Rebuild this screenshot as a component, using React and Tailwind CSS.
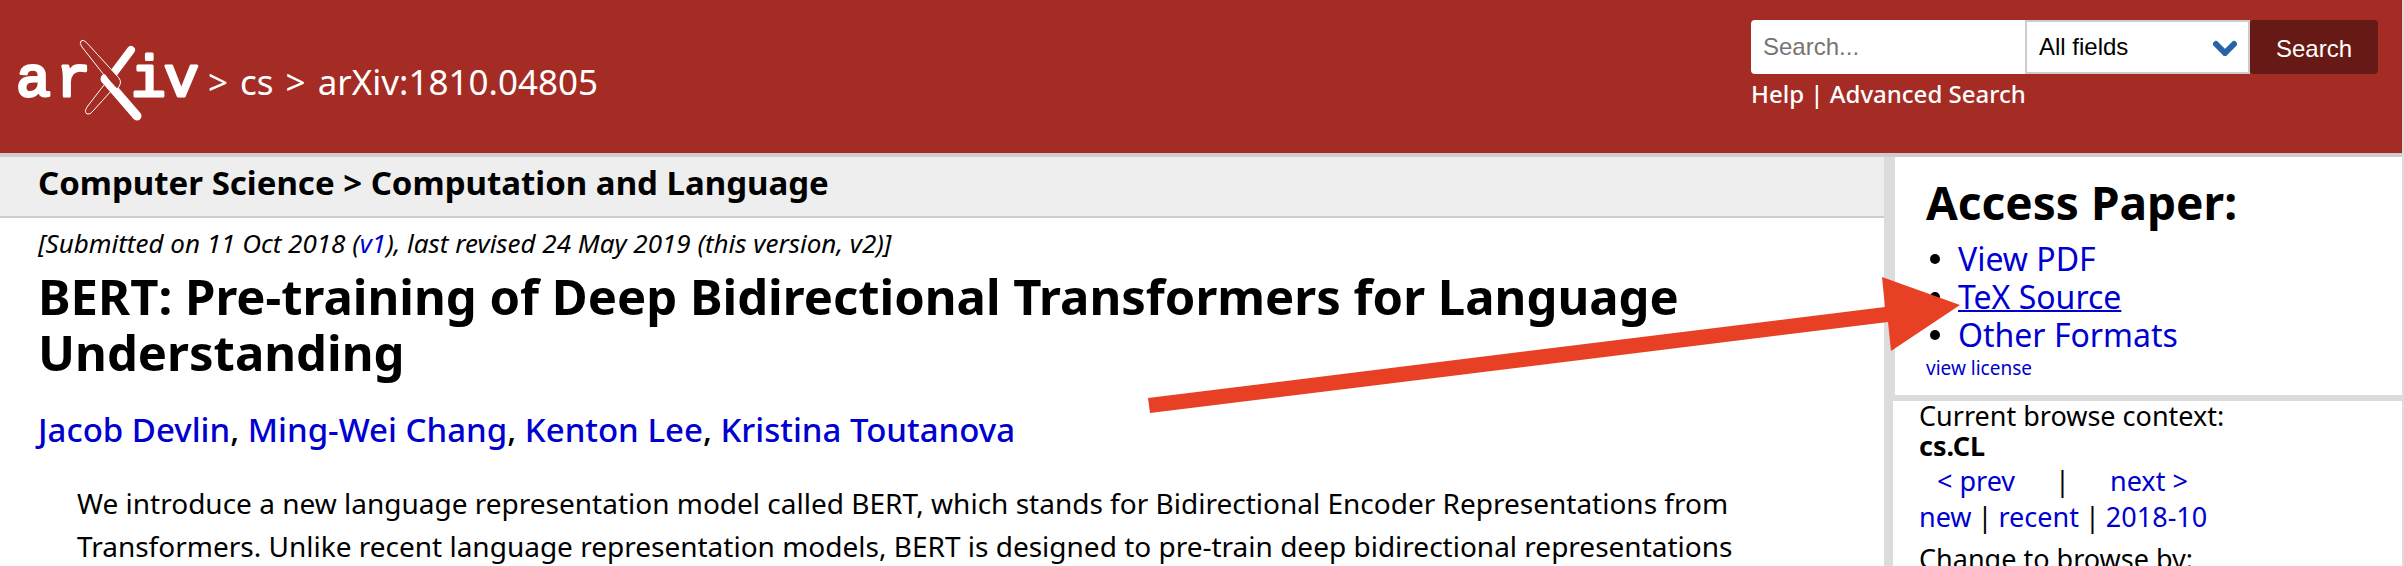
import React from 'react';

const link = 'text-[#0000d0]';

function Logo() {
  return (
    <svg viewBox="-6 0 192 84" className="block h-[84px] w-[192px] shrink-0" role="img" aria-label="arXiv logo">
      <g fill="#fff" stroke="#fff" strokeWidth="3" strokeLinejoin="round" fontFamily="'Liberation Mono', monospace" fontSize="58">
        <text x="-2" y="57">a</text>
        <text x="38" y="57">r</text>
        <text x="113" y="57">i</text>
        <text x="146" y="57">v</text>
      </g>
      <g strokeLinejoin="round" strokeLinecap="round">
        <path d="M95 35 L113 11" stroke="#fff" strokeWidth="8" fill="none" />
        <path d="M86 46 L69 68 Q66 73 69 75 Q72 76 75 72 L94 51" stroke="#fff" strokeWidth="1" fill="none" />
        <path d="M87 40 L119 77" stroke="#fff" strokeWidth="9" fill="none" />
        <path d="M68 3 Q65 0 63 2 Q61 4 64 8 L86 36 L99 50 Q105 44 101 39 Z" stroke="#fff" strokeWidth="1" fill="#a42c24" />
        <path d="M86 38 L91 45 L100 54" stroke="#fff" strokeWidth="5" fill="none" />
      </g>
    </svg>
  );
}

function Header() {
  return (
    <header className="flex h-[157px] items-start justify-between border-b-4 border-[#d0cccb] bg-[#a42c24] pl-3 pr-6 text-white">
      <div className="flex items-start pt-[39px]">
        <a href="#home"><Logo /></a>
        <h1 className="flex gap-3 pl-1 pt-[22px] text-[35px] leading-[42px]">
          <span>&gt;</span>
          <a href="#cs">cs</a>
          <span>&gt;</span>
          <span>arXiv:1810.04805</span>
        </h1>
      </div>
      <form className="w-[627px] pt-5" onSubmit={(e) => e.preventDefault()}>
        <div className="flex h-[54px] font-['Liberation_Sans',sans-serif] text-[24px] leading-[28px]">
          <input type="text" aria-label="Search term or terms" placeholder="Search..." className="min-w-0 flex-1 rounded-l bg-white px-3 text-black placeholder:text-[#757575]" />
          <div className="relative w-[225px]">
            <select aria-label="Field to search" className="h-full w-full appearance-none border-2 border-[#ccc] bg-white px-3 text-black">
              <option>All fields</option>
            </select>
            <svg viewBox="0 0 24 16" className="pointer-events-none absolute right-[13px] top-5 h-4 w-6">
              <path d="M3 4 L12 13 L21 4" fill="none" stroke="#2b63a8" strokeWidth="6" strokeLinecap="round" />
            </svg>
          </div>
          <button type="submit" className="w-32 rounded bg-[#671a15] pt-1">Search</button>
        </div>
        <p className="pt-1 text-[24px] font-medium leading-[32px]">
          <a href="#help">Help</a> | <a href="#advanced">Advanced Search</a>
        </p>
      </form>
    </header>
  );
}

function Sidebar() {
  return (
    <aside className="w-[518px] shrink-0">
      <section className="h-[244px] border-b-[6px] border-l-[11px] border-[#dcdcdc] pl-[31px] pt-[17px]">
        <h2 className="text-[46px] font-bold leading-[56px]">Access Paper:</h2>
        <ul className="list-none pt-[10px] text-[32px] leading-[38px]">
          {['View PDF', 'TeX Source', 'Other Formats'].map((t) => (
            <li key={t} className="flex items-center gap-[18px]">
              <span className="ml-1 h-[10px] w-[10px] rounded-full bg-black" />
              <a href="#format" className={t === 'TeX Source' ? 'text-[#0000d0] underline decoration-2' : link}>{t}</a>
            </li>
          ))}
        </ul>
        <a href="#license" className="block text-[19px] leading-[28px] text-[#0000d0]">view license</a>
      </section>
      <section className="border-l-[9px] border-[#dcdcdc] pl-[26px] text-[27px]">
        <div className="leading-[30px]">Current browse context:</div>
        <div className="font-bold leading-[30px]">cs.CL</div>
        <div className="flex pl-[18px] leading-[40px]">
          <a href="#prev" className={link}>&lt; prev</a>
          <span className="px-10">|</span>
          <a href="#next" className={link}>next &gt;</a>
        </div>
        <div className="flex gap-[6px] leading-[32px]">
          <a href="#new" className={link}>new</a>
          <span>|</span>
          <a href="#recent" className={link}>recent</a>
          <span>|</span>
          <a href="#list" className={link}>2018-10</a>
        </div>
        <div className="pt-2 leading-[35px]">Change to browse by:</div>
      </section>
    </aside>
  );
}

export default function App() {
  return (
    <div className="relative h-screen overflow-hidden border-r-2 border-[#e2dada] bg-white font-['Noto_Sans',sans-serif] text-black">
      <Header />
      <div className="flex">
        <main className="min-w-0 flex-1">
          <div className="border-b-2 border-[#ccc] bg-[#eee] pb-[11px] pl-[38px] pt-[3px] text-[33px] font-bold leading-[45px]">
            Computer Science &gt; Computation and Language
          </div>
          <div className="pl-[38px] pr-[150px]">
            <p className="pt-2 text-[26px] italic leading-[34px]">
              [Submitted on 11 Oct 2018 (<a href="#v1" className={link}>v1</a>), last revised 24 May 2019 (this version, v2)]
            </p>
            <h2 className="pt-2 text-[49px] font-bold leading-[56px]">
              BERT: Pre-training of Deep Bidirectional Transformers for Language Understanding
            </h2>
            <p className="pt-7 text-[33px] font-medium leading-[44px]">
              <a href="#devlin" className={link}>Jacob Devlin</a>, <a href="#chang" className={link}>Ming-Wei Chang</a>,{' '}
              <a href="#lee" className={link}>Kenton Lee</a>, <a href="#toutanova" className={link}>Kristina Toutanova</a>
            </p>
          </div>
          <p className="pl-[77px] pr-[120px] pt-[30px] text-[28px] leading-[43px]">
            We introduce a new language representation model called BERT, which stands for Bidirectional Encoder Representations from Transformers. Unlike recent language representation models, BERT is designed to pre-train deep bidirectional representations
          </p>
        </main>
        <Sidebar />
      </div>
      <svg viewBox="0 0 812 136" className="pointer-events-none absolute right-[442px] top-[277px] h-[136px] w-[812px]" aria-hidden="true">
        <path d="M0 121 L737 30 L734 0 L812 28 L743 74 L740 45 L2 136 Z" fill="#e84025" />
      </svg>
    </div>
  );
}
